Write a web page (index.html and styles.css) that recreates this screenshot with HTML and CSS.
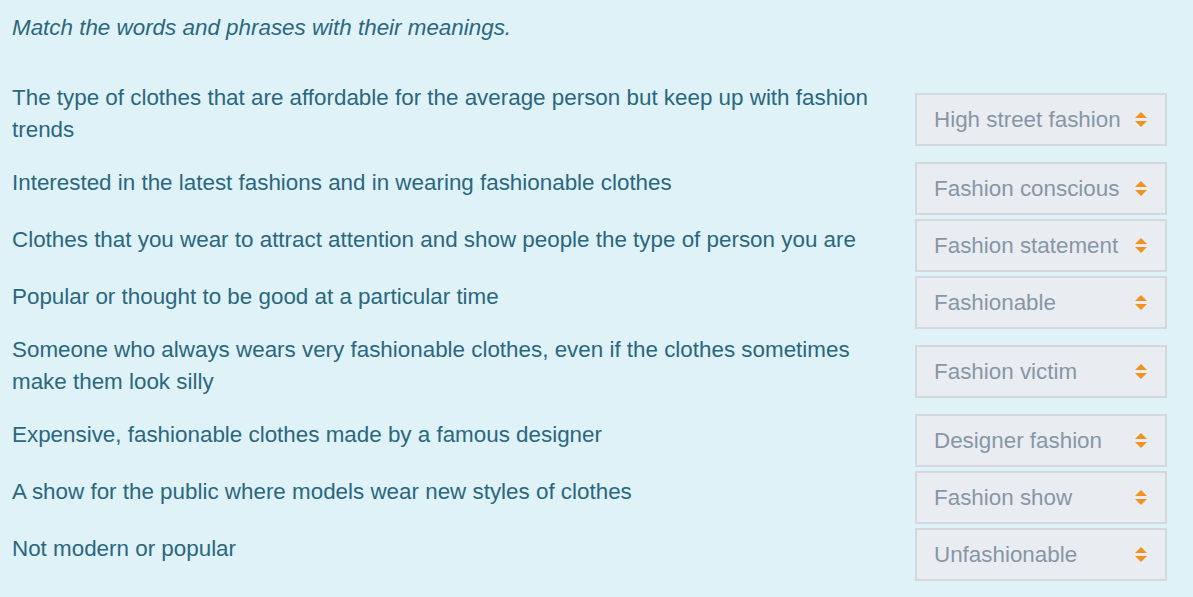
FILE: index.html
```html
<!DOCTYPE html>
<html lang="en">
<head>
<meta charset="utf-8">
<title>Fashion vocabulary – matching</title>
<link rel="stylesheet" href="styles.css">
</head>
<body>
<div class="quiz">
  <p class="instruction">Match the words and phrases with their meanings.</p>
  <div class="answers">
    <div class="row">
      <div class="prompt">The type of clothes that are affordable for the average person but keep up with fashion trends</div>
      <div class="choice"><span class="label">High street fashion</span><span class="arrows"></span></div>
    </div>
    <div class="row">
      <div class="prompt">Interested in the latest fashions and in wearing fashionable clothes</div>
      <div class="choice"><span class="label">Fashion conscious</span><span class="arrows"></span></div>
    </div>
    <div class="row">
      <div class="prompt">Clothes that you wear to attract attention and show people the type of person you are</div>
      <div class="choice"><span class="label">Fashion statement</span><span class="arrows"></span></div>
    </div>
    <div class="row">
      <div class="prompt">Popular or thought to be good at a particular time</div>
      <div class="choice"><span class="label">Fashionable</span><span class="arrows"></span></div>
    </div>
    <div class="row">
      <div class="prompt">Someone who always wears very fashionable clothes, even if the clothes sometimes make them look silly</div>
      <div class="choice"><span class="label">Fashion victim</span><span class="arrows"></span></div>
    </div>
    <div class="row">
      <div class="prompt">Expensive, fashionable clothes made by a famous designer</div>
      <div class="choice"><span class="label">Designer fashion</span><span class="arrows"></span></div>
    </div>
    <div class="row">
      <div class="prompt">A show for the public where models wear new styles of clothes</div>
      <div class="choice"><span class="label">Fashion show</span><span class="arrows"></span></div>
    </div>
    <div class="row">
      <div class="prompt">Not modern or popular</div>
      <div class="choice"><span class="label">Unfashionable</span><span class="arrows"></span></div>
    </div>
  </div>
</div>
</body>
</html>
```
FILE: styles.css
```css
html, body {
  margin: 0;
  padding: 0;
  background: #def2f8;
}

body {
  font-family: "Liberation Sans", Arial, sans-serif;
  font-size: 22.4px;
  color: #2b677d;
}

.quiz {
  padding: 12px 26px 0 12px;
}

.instruction {
  margin: 0;
  font-style: italic;
  line-height: 32px;
}

.answers {
  display: flex;
  flex-direction: column;
  gap: 4px;
  margin-top: 37px;
}

.row {
  display: flex;
  align-items: center;
  gap: 30px;
}

.prompt {
  flex: 1;
  line-height: 32px;
  padding: 1px 0 12px;
}

.choice {
  width: 252px;
  height: 53px;
  box-sizing: border-box;
  flex: none;
  display: flex;
  align-items: center;
  justify-content: space-between;
  padding: 0 18px 0 17px;
  background: #e9edf1;
  border: 2px solid #d2d8de;
  color: #8796a6;
}

/* up/down caret pair drawn with borders */
.arrows {
  width: 12px;
  height: 15px;
  display: flex;
  flex-direction: column;
  justify-content: space-between;
  align-items: center;
}

.arrows::before,
.arrows::after {
  content: "";
  width: 0;
  height: 0;
  border-left: 6px solid transparent;
  border-right: 6px solid transparent;
}

.arrows::before {
  border-bottom: 6px solid #f0921e;
}

.arrows::after {
  border-top: 6px solid #f0921e;
}
```
